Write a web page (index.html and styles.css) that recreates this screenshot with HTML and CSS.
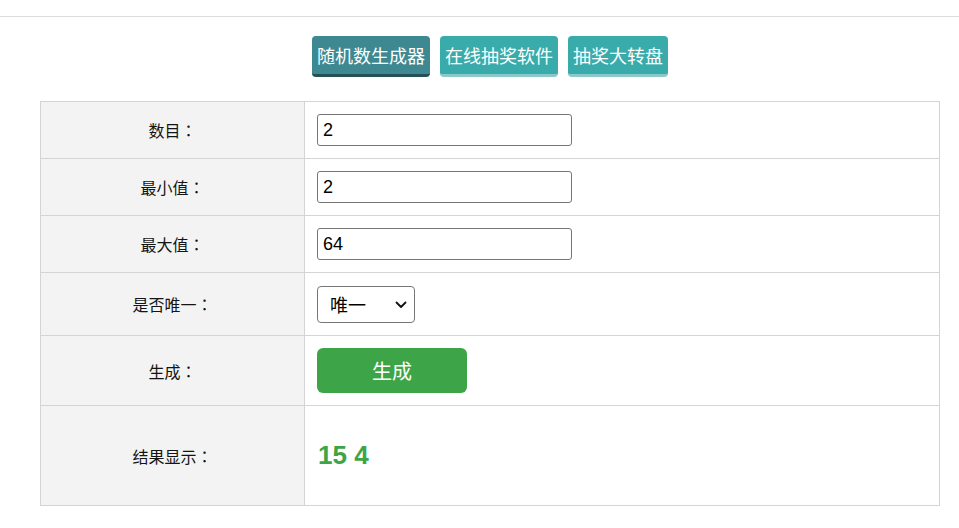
FILE: index.html
```html
<!DOCTYPE html>
<html lang="zh-CN">
<head>
<meta charset="utf-8">
<title>随机数生成器</title>
<link rel="stylesheet" href="styles.css">
</head>
<body>
<div class="topbar"></div>
<div class="wrap">
  <nav class="tabs">
    <a class="tab tab-active" href="#">随机数生成器</a>
    <a class="tab" href="#">在线抽奖软件</a>
    <a class="tab" href="#">抽奖大转盘</a>
  </nav>
  <table class="form">
    <tr class="r57">
      <td class="label">数目<span class="colon" lang="zh-TW">：</span></td>
      <td class="field"><input class="num" type="text" value="2"></td>
    </tr>
    <tr class="r57">
      <td class="label">最小值<span class="colon" lang="zh-TW">：</span></td>
      <td class="field"><input class="num" type="text" value="2"></td>
    </tr>
    <tr class="r57">
      <td class="label">最大值<span class="colon" lang="zh-TW">：</span></td>
      <td class="field"><input class="num" type="text" value="64"></td>
    </tr>
    <tr class="r63">
      <td class="label">是否唯一<span class="colon" lang="zh-TW">：</span></td>
      <td class="field">
        <span class="selbox">
          <select class="sel"><option>唯一</option><option>不唯一</option></select>
          <svg class="chev" width="12" height="8" viewBox="0 0 12 8" aria-hidden="true"><path d="M1.5 1.5 L6 6 L10.5 1.5" fill="none" stroke="#111" stroke-width="1.8" stroke-linecap="round" stroke-linejoin="round"/></svg>
        </span>
      </td>
    </tr>
    <tr class="r70">
      <td class="label">生成<span class="colon" lang="zh-TW">：</span></td>
      <td class="field"><button class="gen" type="button">生成</button></td>
    </tr>
    <tr class="r100">
      <td class="label">结果显示<span class="colon" lang="zh-TW">：</span></td>
      <td class="field"><span class="result">15 4</span></td>
    </tr>
  </table>
</div>
</body>
</html>
```
FILE: styles.css
```css
html, body {
  margin: 0;
  padding: 0;
  background: #fff;
  font-family: "Liberation Sans", "Noto Sans CJK SC", sans-serif;
  color: #111;
}
.topbar {
  height: 16px;
  border-bottom: 1px solid #dcdcdc;
}
.wrap {
  width: 900px;
  margin-left: 40px;
}
.tabs {
  display: flex;
  justify-content: center;
  gap: 10px;
  padding-top: 19px;
  height: 41px;
  margin-bottom: 24px;
}
.tab {
  display: block;
  box-sizing: border-box;
  height: 41px;
  padding: 0 5px;
  line-height: 38px;
  font-size: 18px;
  font-family: "Noto Sans CJK SC", sans-serif;
  color: #fff;
  text-decoration: none;
  background: #3aabab;
  border-bottom: 3px solid #8bc8cb;
  border-radius: 4px;
}
.tab-active {
  background: #3e8892;
  border-bottom-color: #245058;
}
.form {
  width: 900px;
  border-collapse: collapse;
  border: 1px solid #d0d0d0;
}
.form td {
  border: 1px solid #d4d4d4;
  padding: 0 12px;
  vertical-align: middle;
}
.r57 td { height: 56px; }
.r63 td { height: 62px; }
.r70 td { height: 69px; }
.r100 td { height: 99px; }
.label {
  width: 239px;
  background: #f3f3f3;
  text-align: center;
  font-size: 16px;
  font-family: "Noto Sans CJK SC", sans-serif;
  color: #141414;
}
.colon {
  font-family: "Noto Sans CJK TC", sans-serif;
}
.field {
  background: #fff;
}
.num {
  display: block;
  box-sizing: border-box;
  width: 255px;
  height: 32px;
  padding: 0 5px;
  border: 1px solid #767676;
  border-radius: 3px;
  font-size: 18px;
  font-family: "Liberation Sans", sans-serif;
  color: #000;
}
.selbox {
  position: relative;
  display: block;
  width: 98px;
}
.sel {
  display: block;
  box-sizing: border-box;
  width: 98px;
  height: 37px;
  padding: 0 12px;
  border: 1px solid #767676;
  border-radius: 4px;
  background: #fff;
  -webkit-appearance: none;
  appearance: none;
  font-size: 18px;
  font-family: "Noto Sans CJK SC", sans-serif;
  color: #000;
}
.chev {
  position: absolute;
  right: 8px;
  top: 15px;
  pointer-events: none;
}
.gen {
  display: block;
  width: 150px;
  height: 45px;
  border: 0;
  border-radius: 6px;
  background: #3da547;
  color: #fff;
  font-size: 20px;
  font-family: "Noto Sans CJK SC", sans-serif;
}
.result {
  padding-left: 1px;
  font-size: 26px;
  font-weight: bold;
  color: #3da547;
  font-family: "Liberation Sans", sans-serif;
}
```
